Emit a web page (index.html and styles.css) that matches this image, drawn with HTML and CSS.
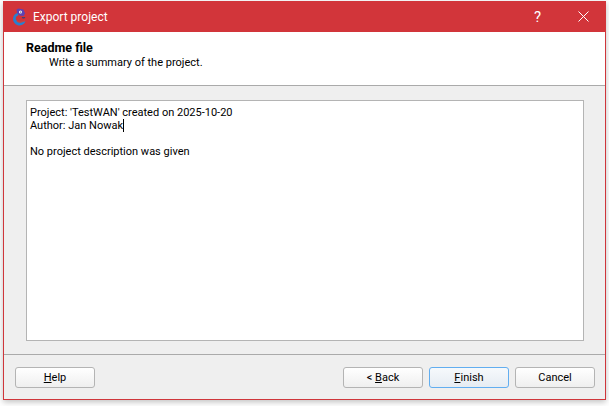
FILE: index.html
```html
<!DOCTYPE html>
<html lang="en">
<head>
<meta charset="utf-8">
<title>Export project</title>
<link rel="stylesheet" href="styles.css">
</head>
<body>
<div class="window">
  <div class="titlebar">
    <svg class="app-icon" width="16" height="18" viewBox="0 0 16 18">
      <path d="M8.500 4.500a6.500 6.500 0 1 0 6 9l-2.500-.5a4 4 0 0 1-6.500-.5c-1.500-2 -.5-4.500 1.500-5z" fill="#2a7fcf"/>
      <path d="M6 13c2 1.500 5 1.500 8-.5" fill="none" stroke="#c9463f" stroke-width="1.300"/>
      <path d="M11 9.500c1 .5 2 .5 3 0" fill="none" stroke="#24427e" stroke-width="1.300"/>
      <path d="M5.500 1.500l2-1 5 1 1.500 4-1.500 2.500-4-.5-2.500-2.500z" fill="#5c43b4"/>
      <circle cx="9.500" cy="4" r="1.500" fill="#fff"/>
      <circle cx="9.700" cy="4" r=".6" fill="#222"/>
    </svg>
    <span class="title">Export project</span>
    <span class="help-btn">?</span>
    <svg class="close-btn" width="11" height="11" viewBox="0 0 11 11">
      <path d="M.5.5l10 10M10.500.5l-10 10" stroke="#fff" stroke-width="1" fill="none"/>
    </svg>
  </div>
  <div class="header">
    <div class="header-title">Readme file</div>
    <div class="header-sub">Write a summary of the project.</div>
  </div>
  <div class="content">
    <div class="editor">
      <div>Project: 'TestWAN' created on 2025-10-20</div>
      <div>Author: Jan Nowak<span class="caret"></span></div>
      <div class="blank"></div>
      <div>No project description was given</div>
    </div>
  </div>
  <div class="footer">
    <button class="btn"><u>H</u>elp</button>
    <div class="spacer"></div>
    <button class="btn">&lt; <u>B</u>ack</button>
    <button class="btn btn-default"><u>F</u>inish</button>
    <button class="btn">Cancel</button>
  </div>
</div>
</body>
</html>
```

FILE: styles.css
```css
* { box-sizing: border-box; }
html, body { margin: 0; height: 100%; }
body {
  background: #fff;
  padding: 1px 3px 0;
  overflow: hidden;
  font-family: "Roboto", "Noto Sans", sans-serif;
  font-size: 11px;
  color: #000;
}
.window {
  width: 603px;
  height: 399px;
  display: flex;
  flex-direction: column;
  background: #efefef;
  border: 1px solid #cf363b;
  border-top: 0;
  box-shadow: 0 2px 6px rgba(0,0,0,.25);
}
.titlebar {
  height: 31px;
  margin: 0 -1px;
  background: #d2353a;
  color: #fff;
  display: flex;
  align-items: center;
  padding: 0 17px 0 8px;
  flex: none;
}
.app-icon { flex: none; }
.title { margin-left: 6px; flex: 1; font-size: 12px; }
.help-btn { font-size: 15px; margin-right: 37px; }
.close-btn { flex: none; }
.header {
  height: 54px;
  flex: none;
  background: #fff;
  border-bottom: 1px solid #aaa;
  padding: 9px 0 0 22px;
  line-height: 14px;
}
.header-title { font-weight: 700; font-size: 12.5px; }
.header-sub { margin: 1px 0 0 23px; }
.content {
  flex: 1;
  padding: 14px 21px 13px 22px;
  display: flex;
}
.editor {
  flex: 1;
  background: #fff;
  border: 1px solid #b4b4b4;
  padding: 5px 3px;
  line-height: 13px;
}
.blank { height: 13px; }
.caret {
  display: inline-block;
  width: 1px;
  height: 13px;
  background: #000;
  vertical-align: -3px;
}
.footer {
  height: 45px;
  flex: none;
  border-top: 1px solid #aaa;
  display: flex;
  align-items: flex-start;
  gap: 6px;
  padding: 12px 10px 0 11px;
}
.spacer { flex: 1; }
.btn {
  width: 80px;
  height: 21px;
  padding: 0;
  border: 1px solid #b4b4b4;
  border-radius: 3px;
  background: linear-gradient(#ffffff, #efefef);
  font: inherit;
  line-height: 17px;
  color: #000;
}
.btn-default {
  border-color: #62aef0;
  background: linear-gradient(#f6f9fc, #e6ecf2);
}
```
